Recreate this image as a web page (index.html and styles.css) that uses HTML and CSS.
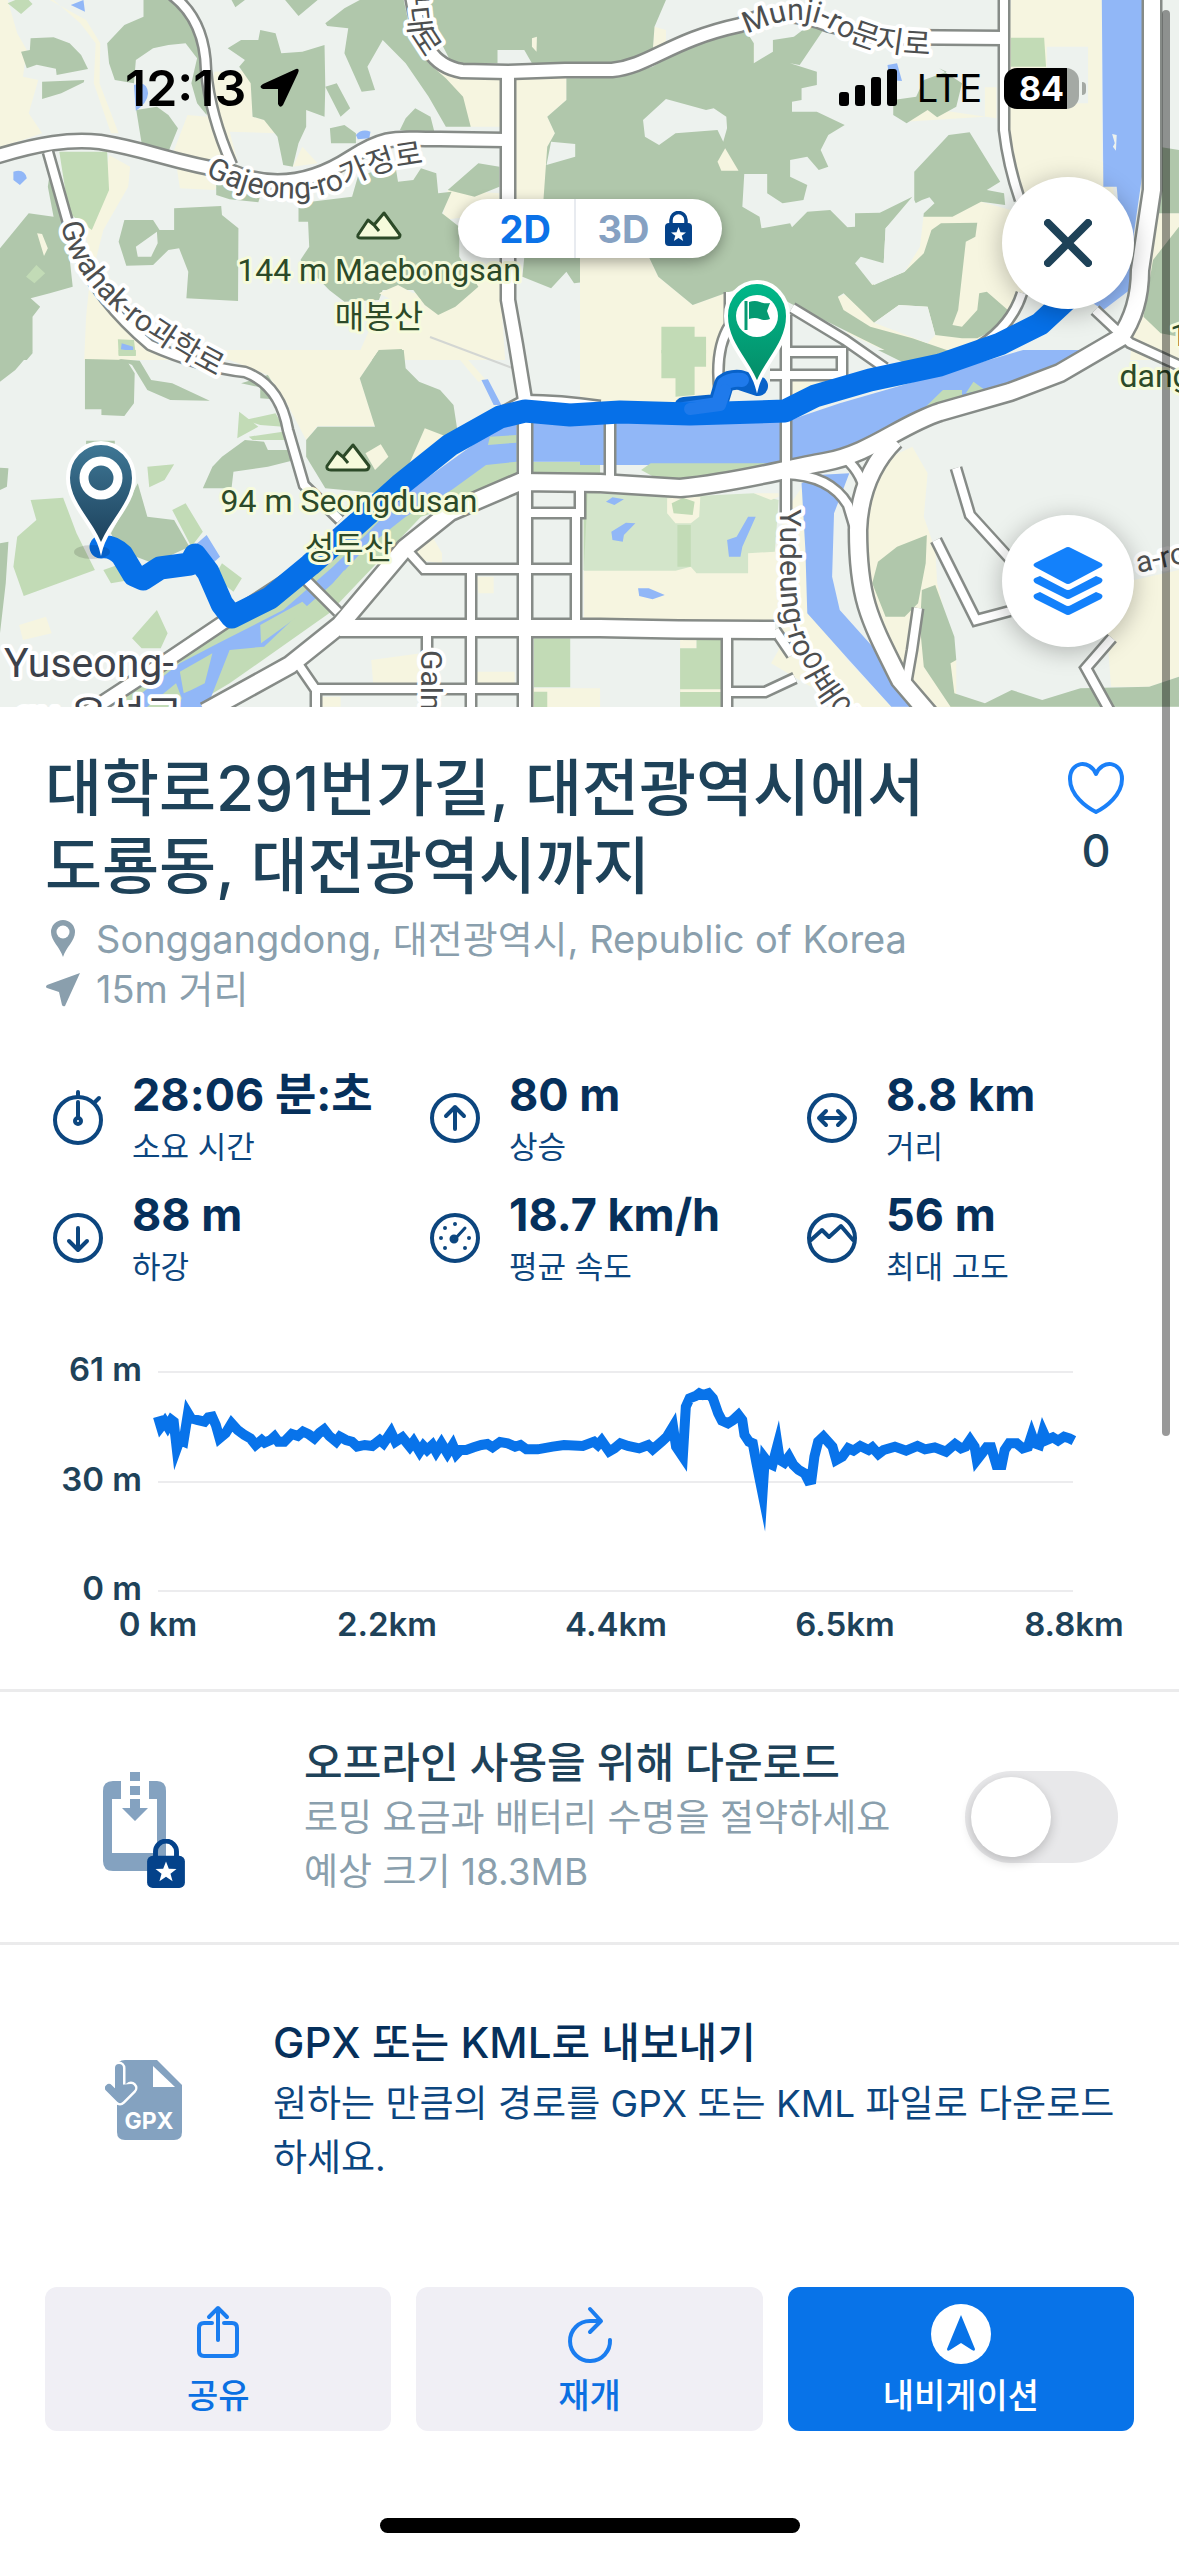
FILE: index.html
```html
<!DOCTYPE html>
<html lang="ko">
<head>
<meta charset="utf-8">
<meta name="viewport" content="width=device-width, initial-scale=1">
<title>대학로291번가길, 대전광역시에서 도룡동, 대전광역시까지</title>
<link rel="stylesheet" href="styles.css">
</head>
<body>
<svg class="defs" aria-hidden="true">
  <symbol id="lock" viewBox="0 0 27 35">
    <path d="M6 14V9a7.500 7.500 0 0 1 15 0v5" fill="none" stroke="#04428a" stroke-width="3.500"/>
    <rect y="12" width="27" height="23" rx="4" fill="#04428a"/>
    <path d="M13.500 16l2 5.200 5.500.2-4.300 3.400 1.500 5.300-4.700-3.100-4.700 3.100 1.500-5.300L6 21.400l5.500-.2z" fill="#fff"/>
  </symbol>
</svg>

<header class="hero">
  <svg class="map" viewBox="0 0 1179 707" role="img" aria-label="경로 지도">
    <defs>
      <linearGradient id="navy" x1="0" y1="0" x2="0" y2="1"><stop offset="0" stop-color="#3f7896"/><stop offset="1" stop-color="#1b3f5a"/></linearGradient>
      <linearGradient id="green" x1="0" y1="0" x2="0" y2="1"><stop offset="0" stop-color="#00b98a"/><stop offset="1" stop-color="#058a66"/></linearGradient>
      <path id="p-gajeong" d="M205 175C250 198 300 208 345 187S400 166 450 160"/>
      <path id="p-gwahak" d="M61 224C72 280 120 330 240 388"/>
      <path id="p-munji" d="M747 34C790 15 810 15 840 35C865 50 885 54 960 56"/>
      <path id="p-yudeung" d="M780 509V570C780 640 798 675 860 750"/>
      <path id="p-daero" d="M404 -20L408 20C410 44 425 58 458 92"/>
      <g id="roads" fill="none">
        <g class="wide">
          <path d="M-5 157C40 143 70 139 100 142C150 150 170 162 232 172C270 188 310 184 350 158S400 140 440 139L505 140"/>
          <path d="M412-5C420 45 432 66 462 71L508 72L565 70L612 70C650 66 670 40 740 25Q780 5 830 25L880 37L1004 38"/>
          <path d="M508 72V300L516 345L525 400V710"/>
          <path d="M88 712L160 665L230 618L310 566L380 500L470 432L525 402Q560 402 600 408"/>
        </g>
        <g class="huge">
          <path d="M205 712L290 665L340 625L405 548L450 512L520 482L600 483L680 488C740 482 780 470 825 462S900 425 940 412L1010 392L1060 373L1120 338Q1140 310 1140 270L1152 190V-5"/>
          <path d="M895 440Q860 475 858 530C858 600 870 620 900 680L930 715"/>
          <path d="M340 628H600Q680 630 775 630"/>
        </g>
        <g class="mid">
          <path d="M172-5Q205 20 206 70Q210 115 232 165"/>
          <path d="M48 152L70 230Q85 290 150 345Q200 367 245 372Q280 385 288 430L304 485L340 520"/>
          <path d="M1004-5V130Q1008 165 1020 200M1022 293Q1012 325 980 346"/>
          <path d="M306 580L338 612M405 548L424 569H578M471 569V710M576 513V628M530 513H580V488M427 632V710M294 658L316 690V710M316 689H525"/>
          <path d="M610 422V478M786 315V520M720 395Q714 350 730 325V292M792 308L845 340L885 368M790 352H842V375H770"/>
          <path d="M727 632V710M727 692H765L795 678M775 630L792 655M785 474Q830 475 848 505L860 545M845 458Q875 485 860 520"/>
          <path d="M956 468L970 515L1020 570M936 540L976 620L1010 611M918 608L912 650L905 690M1112 638L1086 668L1112 715M1095 310L1130 343L1185 368"/>
        </g>
      </g>
    </defs>
    <rect width="1179" height="707" fill="#edf2ee"/>

    <!-- north-west tile -->
    <g transform="scale(.3827 .3333)">
      <g class="cream">
        <path d="M0 0H20L45 100 70 150 60 230 100 240 75 340 110 400 60 420 0 440zM130 0L225 60 262 130 260 250 310 400 290 400 245 250 250 130 210 70 140 0zM455 450L490 345 540 350 560 215 655 210 660 350 690 360 725 400 600 395 620 480 560 570 470 565zM285 465L340 500 335 560 270 690 250 780 330 900 450 1080H220L225 950 240 780 220 690 265 600z"/>
        <path d="M1120 190L1310 230V380H1230L1180 290zM1340 230H1480V300L1430 350 1450 400 1430 440 1425 600H1345zM1170 570L1305 580V640L1155 660zM1230 840L1305 830 1320 1080H930L1000 900zM765 500L790 440 830 490z"/>
      </g>
      <g class="forest">
        <path d="M80 115L140 112 182 130 212 165 230 207 148 225 146 206 96 194 70 205 55 155 78 150zM110 245L220 240 219 247 160 280 110 297zM280 130L325 75 375 50V0H440L500 30 530 80 540 140 520 180 545 260 540 345 515 310 500 250 515 175 485 130 440 135 400 145 355 180 350 250 300 240 285 190zM356 330L410 320 440 345 465 385 440 455 370 430zM595 145L630 120 675 120 680 90 720 100 735 160 790 155 848 135 850 260 848 350 800 330 800 380 780 430 765 500 740 495 725 410 690 360 660 350 655 250 625 200 640 180z"/>
        <path d="M850 260L880 250 915 325 890 350zM605 0H640L615 22zM745 0H830L780 48zM850 70L900 25 940 0H1055L1075 110 1120 190 1165 235 1210 290 1230 380H1165L1120 290 1060 190 1000 120 960 200 980 270 945 275 900 160 910 85 855 78zM1085 0H1568V190L1400 210 1370 150H1300V190L1180 190 1140 100zM1085 325L1125 350 1135 395 1100 400 1045 390 1060 355zM862 385L900 375 930 400V430H865zM565 540L620 575 685 570 675 607 600 598 565 585z"/>
        <path d="M780 610L920 590 935 530 1000 505 1035 510 1040 545 1080 540 1100 505 1140 520 1145 580 1180 575 1155 640 1200 680V770L1250 860 1190 920 1145 945 1110 915 1080 870H1000L990 900 900 905 860 870 785 780 808 740 805 665H780zM1170 570L1250 490 1305 500V560L1240 590zM455 625L578 618 580 645 623 685 622 903 487 895 492 815 468 745 440 750 400 795 330 797 310 725 325 660H400L417 690H455zM0 745L75 640 140 650 125 560 130 520 150 530 170 650 190 860 130 880 80 895 105 920 85 950V1060L70 1080H0zM970 1080L990 1050 1050 1047 1055 1080zM1568 235H1480V300L1430 350 1450 400 1430 440 1420 600H1568zM1370 770H1568V840L1500 850 1480 815 1440 865 1365 830z"/>
      </g>
      <path class="land" d="M355 740L410 695 412 730 395 770 360 770zM1428 495L1440 425 1503 432V470z"/>
      <path class="cream" d="M990 880L1040 855 1080 880 1060 920zM97 700L110 702 125 745 115 768zM1390 115L1403 110 1402 155 1390 140z"/>
      <path class="park" d="M155 455H280L285 570 240 690 180 640zM20 10L40 0H75L85 12 55 42zM95 795L118 820 90 850 68 830zM308 1018L350 1020 355 1065H310z"/>
      <path class="water" d="M185 15L218 0 222 35zM350 255Q385 240 387 280 385 310 355 332zM35 515Q65 505 70 535L52 555 35 540zM930 405Q945 385 968 395L965 415 935 418zM318 1030L348 1040V1054L316 1048z"/>
    </g>

    <!-- north-east tile -->
    <g transform="translate(580) scale(.382 .3333)">
      <path class="cream" d="M1128 0H1366V480L1395 560 1410 700 1160 700 1110 400zM0 770H180L205 830 295 915 380 880V1080H0zM890 650L1050 605 1160 640 1160 900 1020 1040 850 1080 700 1000 675 890 850 815zM1490 640H1568V1080H1440zM190 160L195 80 225 90V130zM405 185L455 130V190zM850 365L910 325 1090 355V262H1060V350z"/>
      <path class="forest" fill-rule="evenodd" d="M0 0H225L195 80 190 160 100 190 0 190zM0 230L100 230 190 200 320 110 430 85 455 130V190L505 155V120L560 110 600 75 640 85 575 195 550 190 620 215V255L580 265V300L555 305V335H620L693 375 650 405 630 450 650 500 625 510 595 470 550 480V530L595 555 585 600 530 610 490 580V522H430L425 620 470 650 475 685 550 670 555 682 595 635 655 630 700 682 720 680V640L785 638 870 590 800 685 795 790 735 770 720 790 765 855 850 815 900 760 920 690 945 670 1040 668 1035 710 1010 725 990 930 975 975 1000 980 1040 930 1045 880 1065 875 1120 930 1100 980 1040 1015 1000 1015 930 1005 910 920 835 915 770 968 690 880 675 890 690 930 760 980 870 1015 960 1050 940 1080H850L550 910 460 850 380 880 295 915 205 830 180 770H0zM165 360L225 297 330 330 350 325 383 350 385 385 375 425 360 390 250 400 207 435 170 410z"/>
      <path class="forest" d="M875 515L965 405 1020 397 1100 545 1065 570 1110 580 1113 615 1050 605 975 650 895 650 875 600zM820 300L880 290 900 240 960 215 940 205 1000 250 985 320 935 352 910 330 855 370 820 345zM1515 440L1568 450V640H1500zM1568 680L1500 780 1475 950 1520 1000 1568 1010z"/>
      <path class="land" d="M895 600L915 592 928 610 900 640 890 740 850 815 770 855 745 820 795 790 800 685 860 620zM770 968L835 915 910 920 930 1005 910 1030zM1222 140H1330V310H1222z"/>
      <path class="cream" d="M380 445L415 512H370L360 485z"/>
      <path class="park" d="M1128 113H1215L1220 200H1128zM213 980H300V1010H330V1080H213z"/>
      <path class="water" d="M1366 0H1480L1475 500 1450 700V860L1370 930 1330 900 1420 750 1405 560 1370 560zM805 195L830 190 843 243 810 240z"/>
      <path class="land" d="M1393 402L1405 405 1403 452 1395 440 1400 430z"/>
    </g>

    <!-- south-west tile -->
    <g transform="translate(0 350) scale(.3827 .3333)">
      <path class="cream" d="M350 0H990L940 85 980 228H830L800 270 745 150 700 75 600 30zM50 825L120 800 135 850 60 870zM970 930L1100 910V1000H975zM1245 680H1290V730H1250zM1245 965H1345V1000H1245zM1390 1015H1568V1075H1390zM1070 570L1130 560 1155 610V640L1090 630zM840 1040H890V1070H840zM1180 0L1200 0 1270 90 1250 95z"/>
      <path class="forest" d="M222 27L330 30 352 70 350 160 325 198 265 195V178H222zM310 27L365 32 395 90 450 100 548 152 445 150 385 120 345 45zM0 0H85L40 60 0 95zM0 353L22 355 18 410 0 420zM0 580L22 575 15 700 0 850zM990 0H1055L1060 55 1095 95 1150 120 1185 165 1195 240 1070 370 990 430 850 415 800 320V270L830 230H980L940 85zM580 320L640 270 690 275 700 300 755 300 770 330 700 350 610 365 605 415 530 415 555 350zM360 400L385 500 455 510 495 590 400 640 310 600 290 550zM630 100L700 75 740 150 680 145V112zM225 272H300V290H225z"/>
      <path class="cream" d="M1070 340L1110 235 1190 270 1100 380zM955 310L995 283 1015 320 980 360z"/>
      <path class="park" d="M80 450L165 443 200 550 248 660 62 738 35 650 45 560 95 510zM385 350L455 343 430 390 390 412zM625 185L675 230 620 265zM640 210L720 190 740 230 680 225zM650 260L770 240 765 270H660zM450 480L485 460 530 545 500 590zM580 640L632 685 610 725 560 680zM270 660L320 640 340 690 290 700zM345 865L410 780 438 850 420 895 370 895zM300 1075L500 850 650 780 850 600 1000 500 1240 330 1350 260V410L1100 500 860 790 600 1000 490 1075zM1395 865H1490V1012H1395zM1395 1025H1430V1075H1395zM1390 335H1568V372H1390zM1525 430H1568V660H1525zM310 0H355V18H310z"/>
      <path class="water" d="M320 1075L470 940 570 880 740 780 870 650 960 550 1060 430 1290 240 1350 210V335L1270 345 1180 420 1060 500 950 600 870 700 800 770 690 890 600 900 540 1075zM1258 90L1275 88 1310 165 1290 165zM505 590L540 555 575 620 545 650zM1390 210H1568V335H1390z"/>
      <path class="park" d="M680 825L790 755 808 775 700 865 682 880zM470 965L555 910 535 1000 500 1020 480 1030zM380 1075L460 1000 475 1045 465 1075zM840 740L900 660 905 680 860 740zM1280 260L1350 255V278L1275 285z"/>
    </g>

    <!-- south-east tile -->
    <g transform="translate(580 350) scale(.382 .3333)">
      <path class="cream" d="M0 10H380V160H0zM550 80H680L640 150 550 160zM10 662L510 600 540 480 600 380 620 800 700 930 820 1075H700L500 940 520 900 530 820H10zM720 370L870 290 910 370 900 500 930 600 935 700 985 930V1075H870L720 600zM1568 660L1450 690 1380 850 1390 1010H1490L1568 980zM262 860H305V895H262z"/>
      <path fill="#d3e5ca" d="M20 430L260 440 455 430 520 450 510 605 440 610V670L305 670 290 650 250 662H10z"/>
      <path class="cream" d="M228 445L315 440 312 500 290 520H250L228 490zM455 430H520V440L500 450z"/>
      <path class="park" d="M240 460L270 443 300 455 295 495 245 490zM255 525H290V650H255zM305 860H370V1070H262V895H305zM213 0H330V50H300V135L250 140V85H213z"/>
      <path class="cream" d="M262 1018H370V1026H262z"/>
      <path class="water" d="M0 215L550 210 680 160 920 80 1160 0H1320L1180 90 1000 140 900 190 690 300 545 345 0 345zM580 400L620 375 705 370 665 490 660 680 680 780 860 1010 880 1070H815L700 925 595 790 590 600zM68 455L85 442 115 448 90 465zM82 545L120 518 145 520 115 555 112 575 85 570zM385 570L410 560 440 500 460 500 425 590 420 620 390 620zM152 715L180 715 222 735 190 748 155 738z"/>
      <path class="park" d="M160 360L185 340H530L400 385H200zM905 170L950 120 1000 120 1000 145 900 190zM1010 130L1030 95 1060 120z"/>
      <path class="forest" d="M908 555L905 640 885 760 850 800 800 800 765 700 780 635 830 590zM895 720L930 705 980 860 985 930 970 940 980 1030 1060 1060 1130 1020 1210 1050 1310 1015 1490 1010 1568 980V1070H970L900 950 890 830zM780 0H1100L850 40z"/>
    </g>

    <path d="M430 337L515 369" stroke="#d3d6d3" stroke-width="2"/>
    <use href="#roads" class="casing"/>
    <use href="#roads" class="fill"/>

    <!-- recorded route -->
    <g fill="none" stroke="#0670e8" stroke-linejoin="round" stroke-linecap="round">
      <path stroke="#0862c9" stroke-width="20" d="M684 407L718 404 724 384Q730 379 740 380L758 386"/>
      <path stroke="#1f7aeb" stroke-width="14" d="M684 409L718 404 724 384Q730 379 742 380"/>
      <path stroke-width="23" d="M101 547Q112 545 122 555L134 575 143 579 160 568 190 564 195 555 208 572 222 604 232 617 270 598 310 565 350 530 400 485 450 445 500 417 525 411 570 415 620 412 690 414 785 411 815 396 870 380 940 365 1000 344 1040 324 1068 298"/>
      <path stroke="#1f7aeb" stroke-width="12" d="M690 409L720 405 725 390"/>
    </g>

    <!-- summits -->
    <g fill="#f6fbdc" stroke="#2c4a28" stroke-width="3" stroke-linejoin="round">
      <path d="M358 235L368 220 374 225 384 213 400 235Q400 238 396 238H361Q357 238 358 235zM374 225L379 231"/>
      <path d="M327 466L337 452 343 457 353 445 369 466Q369 470 365 470H331Q326 470 327 466zM343 457L348 463"/>
    </g>

    <defs>
      <g id="peak-names" class="peak">
        <text x="379" y="281">144 m Maebongsan</text>
        <text x="379" y="328">매봉산</text>
        <text x="349" y="512">94 m Seongdusan</text>
        <text x="349" y="559">성두산</text>
        <text x="1179" y="346">1</text>
        <text x="1155" y="387">dang</text>
      </g>
      <g id="street-names" class="street">
        <text><textPath href="#p-gajeong">Gajeong-ro가정로</textPath></text>
        <text><textPath href="#p-gwahak">Gwahak-ro과학로</textPath></text>
        <text><textPath href="#p-munji">Munji-ro문지로</textPath></text>
        <text><textPath href="#p-yudeung">Yudeung-ro야배야로</textPath></text>
        <text><textPath href="#p-daero">구대로</textPath></text>
        <text transform="translate(421 650) rotate(90)">Galma-ro</text>
        <text transform="translate(1138 573) rotate(-12)">a-ro</text>
      </g>
      <g id="town-names" class="town">
        <text x="4" y="677">Yuseong-</text>
        <text x="14" y="730">gu 유성구</text>
      </g>
    </defs>
    <use href="#peak-names" class="halo halo-peak"/>
    <use href="#peak-names" fill="#2c4a28"/>
    <use href="#street-names" class="halo"/>
    <use href="#street-names" fill="#4d4f50"/>
    <use href="#town-names" class="halo"/>
    <use href="#town-names" fill="#3d424b"/>

    <!-- start and finish pins -->
    <ellipse cx="92" cy="552" rx="18" ry="7" fill="#0002"/>
    <path d="M101 548C95 525 68 505 68 478A33 35 0 0 1 134 478C134 505 107 525 101 548z" fill="url(#navy)" stroke="#fff" stroke-width="4"/>
    <circle cx="101" cy="478" r="17" fill="none" stroke="#fff" stroke-width="9"/>
    <path d="M757 386C751 364 726 345 726 316A31 34 0 0 1 788 316C788 345 763 364 757 386z" fill="url(#green)" stroke="#fff" stroke-width="4"/>
    <circle cx="757" cy="316" r="21" fill="#fff"/>
    <path d="M746 301V330" stroke="#059a72" stroke-width="3"/>
    <path d="M749 302Q755 300 760 302T770 303L767 311 770 319Q765 321 760 319T749 319z" fill="#059a72"/>
  </svg>

  <div class="status">
    <span class="time">12:13</span>
    <svg class="loc" viewBox="0 0 40 40"><path d="M36 1Q40 0 38 5L23 37Q20 41 18 36V21H3Q-2 19 3 16z"/></svg>
    <svg class="signal" viewBox="0 0 58 38"><rect y="23" width="10" height="14" rx="3"/><rect x="16" y="16" width="10" height="21" rx="3"/><rect x="32" y="8" width="10" height="29" rx="3"/><rect x="48" width="10" height="37" rx="3"/></svg>
    <span class="net">LTE</span>
    <span class="battery"><b>84</b></span>
  </div>

  <div class="dims">
    <button class="dim on" type="button">2D</button>
    <button class="dim" type="button">3D <svg class="lock"><use href="#lock"/></svg></button>
  </div>

  <button class="round close" type="button" aria-label="닫기">
    <svg viewBox="0 0 48 48" width="48" height="48"><path d="M4 4L44 44M44 4L4 44" stroke="#1e4258" stroke-width="8" stroke-linecap="round"/></svg>
  </button>
  <button class="round layers" type="button" aria-label="지도 레이어">
    <svg viewBox="0 0 70 70" width="70" height="70" fill="#1381fb"><path d="M32 2Q35 0 38 2L68 17Q71 19 68 21L38 37Q35 39 32 37L2 21Q-1 19 2 17z"/><path d="M7 30L32 43Q35 45 38 43L63 30 68 32Q71 34 68 37L38 52Q35 54 32 52L2 37Q-1 34 2 32z"/><path d="M7 46L32 59Q35 61 38 59L63 46 68 48Q71 50 68 53L38 68Q35 70 32 68L2 53Q-1 50 2 48z"/></svg>
  </button>
</header>

<main>
  <section class="intro">
    <div class="names">
      <h1>대학로291번가길, 대전광역시에서 도룡동, 대전광역시까지</h1>
      <p class="meta"><svg viewBox="0 0 36 40"><path d="M18 38C15 28 6 22 6 13A12 12 0 0 1 30 13C30 22 21 28 18 38z"/><circle cx="18" cy="13" r="6.500" fill="#fff"/></svg>Songgangdong, 대전광역시, Republic of Korea</p>
      <p class="meta"><svg viewBox="0 0 36 40"><path d="M35 4L20 37Q18 38 17 36L14 23 2 19Q0 18 2 16z"/></svg>15m 거리</p>
    </div>
    <button class="like" type="button" aria-label="좋아요">
      <svg viewBox="0 0 58 54"><path d="M29 51C19 46 3 34 3 18C3 0 23-2 29 13C35-2 55 0 55 18C55 34 39 46 29 51z" fill="none" stroke="#1a80f8" stroke-width="4" stroke-linejoin="round"/></svg>
      <span>0</span>
    </button>
  </section>

  <dl class="stats">
    <div class="stat"><svg viewBox="0 0 60 60"><circle cx="30" cy="30" r="23"/><path d="M30 2V7M47 12L51 8M30 12V28"/><circle cx="30" cy="31" r="3"/></svg><div><dd>28:06 분:초</dd><dt>소요 시간</dt></div></div>
    <div class="stat"><svg viewBox="0 0 60 60"><circle cx="30" cy="28" r="23"/><path d="M30 39V17M21 26L30 17 39 26"/></svg><div><dd>80 m</dd><dt>상승</dt></div></div>
    <div class="stat"><svg viewBox="0 0 60 60"><circle cx="30" cy="28" r="23"/><path d="M17 28H43M24 21L17 28 24 35M36 21L43 28 36 35"/></svg><div><dd>8.8 km</dd><dt>거리</dt></div></div>
    <div class="stat"><svg viewBox="0 0 60 60"><circle cx="30" cy="28" r="23"/><path d="M30 18V39M21 31L30 40 39 31"/></svg><div><dd>88 m</dd><dt>하강</dt></div></div>
    <div class="stat"><svg viewBox="0 0 60 60"><circle cx="30" cy="28" r="23"/><path d="M29 30L40 18" stroke-width="3"/><circle cx="29" cy="29" r="2.500"/><path d="M30 14V14M20 18V18M16 28V28M20 38V38M40 38V38M44 28V28"/></svg><div><dd>18.7 km/h</dd><dt>평균 속도</dt></div></div>
    <div class="stat"><svg viewBox="0 0 60 60"><circle cx="30" cy="28" r="23"/><path d="M9 30L20 20 27 27 39 16 51 30"/></svg><div><dd>56 m</dd><dt>최대 고도</dt></div></div>
  </dl>

  <svg class="chart" viewBox="0 0 1179 379" role="img" aria-label="고도 그래프">
    <path d="M158 62H1073M158 172H1073M158 281H1073" stroke="#ececee" stroke-width="2"/>
    <polyline transform="scale(.752 .3333)" points="210,320 214,350 219,335 223,350 228,330 231,335 235,415 239,390 244,395 250,310 254,325 262,330 272,335 277,322 282,320 287,345 292,385 300,370 308,340 316,360 325,375 333,385 340,405 348,390 352,398 360,390 365,380 370,395 378,395 388,372 396,378 403,365 410,372 418,385 425,368 431,358 438,378 447,395 452,380 460,390 468,395 475,410 485,405 495,408 505,390 510,400 520,367 526,395 535,382 545,410 550,395 558,425 563,408 568,420 575,405 580,425 587,400 595,430 602,405 607,432 612,420 620,420 630,412 640,405 648,402 655,412 665,396 675,400 685,410 692,405 700,418 715,418 735,410 750,405 775,408 790,395 795,405 800,392 810,424 817,415 825,400 835,408 850,415 862,405 868,418 880,395 887,380 895,350 899,410 908,440 912,290 917,265 925,258 930,250 935,255 942,250 948,265 955,310 960,332 968,340 975,330 982,315 987,330 990,375 996,395 1001,400 1006,460 1014,550 1017,445 1022,460 1027,465 1034,405 1037,450 1043,458 1049,440 1055,465 1062,480 1070,490 1075,512 1079,510 1083,440 1088,395 1095,380 1103,400 1107,410 1112,450 1120,440 1128,415 1135,422 1144,408 1155,420 1160,412 1168,432 1175,420 1190,410 1205,422 1220,408 1230,418 1243,412 1258,425 1270,402 1278,415 1284,410 1290,390 1296,410 1299,450 1306,430 1312,412 1318,412 1325,465 1332,465 1336,420 1342,400 1352,400 1360,415 1367,410 1372,375 1376,400 1382,405 1387,365 1392,390 1400,382 1407,392 1415,380 1422,385 1428,392"/>
    <g class="y-ticks"><text x="142" y="71">61 m</text><text x="142" y="181">30 m</text><text x="142" y="290">0 m</text></g>
    <g class="x-ticks"><text x="158" y="326">0 km</text><text x="387" y="326">2.2km</text><text x="616" y="326">4.4km</text><text x="845" y="326">6.5km</text><text x="1074" y="326">8.8km</text></g>
  </svg>

  <section class="row">
    <svg class="row-icon" viewBox="0 0 84 142" width="84" height="142">
      <path fill="#84a2c0" d="M10 35H18V53H9V107H54V53H46V35H54Q63 35 63 45V125H10Q0 125 0 115V45Q0 35 10 35z"/>
      <path fill="#84a2c0" d="M27 26H37V35H27zM27 40H37V49H27zM27 53H37V62H45L32 75 19 62H27z"/>
      <use href="#lock" x="44" y="93" width="38" height="49"/>
    </svg>
    <div class="row-text offline">
      <h2><label for="offline">오프라인 사용을 위해 다운로드</label></h2>
      <p>로밍 요금과 배터리 수명을 절약하세요<br>예상 크기 18.3MB</p>
    </div>
    <input class="switch" id="offline" type="checkbox" role="switch">
  </section>

  <section class="row export">
    <svg class="row-icon" viewBox="0 0 78 82" width="78" height="82">
      <path fill="#84a2c0" d="M20 1H52L77 26V73Q77 81 69 81H20Q12 81 12 73V9Q12 1 20 1z"/>
      <path fill="#fff" d="M48 7V28H70z"/>
      <path d="M14 9V30M4 29L15 40 26 29" fill="none" stroke="#fff" stroke-width="13" stroke-linecap="round" stroke-linejoin="round"/>
      <path d="M14 9V30M4 29L15 40 26 29L14 30" fill="#84a2c0" stroke="#84a2c0" stroke-width="8" stroke-linecap="round" stroke-linejoin="round"/>
      <text x="44" y="70">GPX</text>
    </svg>
    <div class="row-text">
      <h2>GPX 또는 KML로 내보내기</h2>
      <p>원하는 만큼의 경로를 GPX 또는 KML 파일로 다운로드하세요.</p>
    </div>
  </section>
</main>

<nav class="actions">
  <button type="button"><svg viewBox="0 0 60 60"><path d="M24 19H16Q11 19 11 24V47Q11 52 16 52H44Q49 52 49 47V24Q49 19 44 19H36M30 36V5M21 13L30 4 39 13"/></svg>공유</button>
  <button type="button"><svg viewBox="0 0 60 60"><path d="M40 17H31A20 20 0 1 0 51 36M31 5L42 17 31 28"/></svg>재개</button>
  <button type="button" class="primary"><svg viewBox="0 0 60 60"><circle cx="30" cy="30" r="30" class="disc"/><path class="needle" d="M30 11L44 45Q44 48 41 46L30 39 19 46Q16 48 16 45z"/></svg>내비게이션</button>
</nav>
<div class="home"></div>
<div class="thumb"></div>
</body>
</html>
```
FILE: styles.css
```css
* { box-sizing: border-box; }

body {
  margin: 0;
  position: relative;
  min-height: 100vh;
  background: #fff;
  color: #1e4259;
  font-family: "Inter", "Noto Sans CJK KR", sans-serif;
}

h1, h2, p, dl, dd, dt { margin: 0; }
button { border: 0; padding: 0; background: none; font: inherit; color: inherit; }
.defs { position: absolute; width: 0; height: 0; }

/* Map */
.hero { position: relative; }
.map {
  display: block;
  width: 100%;
  height: auto;
  font-family: "Roboto", "Noto Sans CJK KR", sans-serif;
}
.cream { fill: #f6f5e0; }
.forest { fill: #b0c7ab; }
.park { fill: #c2dbb6; }
.water { fill: #91b7f7; }
.land { fill: #edf2ee; }

.casing { stroke: #868b87; --grow: 5px; }
.fill { stroke: #fff; --grow: 0px; }
.mid { stroke-width: calc(8px + var(--grow)); }
.wide { stroke-width: calc(12px + var(--grow)); }
.huge { stroke-width: calc(16px + var(--grow)); }

.halo { fill: #fff; stroke: #fff; stroke-width: 8px; stroke-linejoin: round; }
.halo-peak { fill: #f6fbdc; stroke: #f6fbdc; stroke-width: 6px; }
.peak { font-size: 32px; text-anchor: middle; }
.street { font-size: 30px; }
.town { font-size: 41px; }

/* Status bar */
.status {
  position: absolute;
  inset: 60px 100px auto 125px;
  display: flex;
  align-items: center;
  height: 56px;
  color: #000;
}
.time { font-size: 50px; font-weight: 600; }
.loc { width: 40px; height: 40px; margin-left: 14px; }
.signal { width: 58px; height: 38px; margin-left: auto; }
.net { margin: 0 22px 0 20px; font-size: 38px; }
.battery {
  position: relative;
  width: 75px;
  height: 41px;
  border-radius: 13px;
  background: linear-gradient(90deg, #000 84%, #a4a9a4 84%);
  color: #fff;
  font-size: 34px;
  line-height: 41px;
  text-align: center;
}
.battery::after {
  content: "";
  position: absolute;
  left: 78px;
  top: 14px;
  width: 4px;
  height: 13px;
  border-radius: 0 4px 4px 0;
  background: #a4a9a4;
}

/* Map controls */
.dims {
  position: absolute;
  top: 199px;
  left: 50%;
  transform: translateX(-50%);
  display: flex;
  width: 264px;
  height: 59px;
  border-radius: 30px;
  background: #fff;
  box-shadow: 0 4px 14px #0005;
}
.dim {
  display: flex;
  align-items: center;
  gap: 16px;
  padding-left: 22px;
  color: #86a1c2;
  font-size: 38px;
  font-weight: 700;
}
.dim.on {
  width: 118px;
  padding-left: 42px;
  border-right: 2px solid #e8ebf0;
  color: #0b72e8;
}
.lock { width: 27px; height: 35px; }
.round {
  position: absolute;
  right: 45px;
  display: grid;
  place-items: center;
  width: 132px;
  height: 132px;
  border-radius: 50%;
  background: #fff;
  box-shadow: 0 4px 24px #0004;
}
.close { top: 177px; }
.layers { top: 515px; }

/* Title */
.intro { display: flex; justify-content: space-between; padding: 43px 45px 0; }
.names { flex: 1; }
h1 { margin-bottom: 8px; font-size: 62px; line-height: 78px; font-weight: 500; word-break: keep-all; }
.meta {
  display: flex;
  align-items: center;
  gap: 15px;
  color: #8a9fad;
  font-size: 38px;
  line-height: 50px;
}
.meta svg { width: 36px; height: 40px; fill: #8a9fad; }
.like {
  display: flex;
  flex-direction: column;
  align-items: center;
  align-self: flex-start;
  gap: 8px;
  width: 76px;
  padding-top: 11px;
  font-size: 45px;
  font-weight: 500;
}
.like svg { width: 58px; height: 54px; }

/* Figures */
.stats {
  display: grid;
  grid-template-columns: repeat(3, 1fr);
  gap: 16px 0;
  padding: 54px 0 0 48px;
}
.stat { display: flex; align-items: center; gap: 24px; }
.stat svg {
  width: 60px;
  height: 60px;
  fill: none;
  stroke: #0c467f;
  stroke-width: 4px;
  stroke-linecap: round;
  stroke-linejoin: round;
}
.stat dd { color: #06305b; font-size: 45px; font-weight: 700; line-height: 54px; }
.stat dt { color: #0c467f; font-size: 31px; line-height: 50px; }

/* Elevation chart */
.chart { display: block; width: 100%; height: auto; margin-top: 18px; }
.chart polyline {
  fill: none;
  stroke: #0873ea;
  stroke-width: 10px;
  stroke-miterlimit: 20;
  vector-effect: non-scaling-stroke;
}
.chart text { fill: #1e4259; font-size: 33px; font-weight: 600; }
.y-ticks { text-anchor: end; }
.x-ticks { text-anchor: middle; }

/* Option rows */
.row {
  display: flex;
  align-items: center;
  padding: 43px 61px 43px 103px;
  border-top: 3px solid #ebebec;
}
.row-icon { flex: none; }
.row-text { flex: 1; margin-left: 90px; color: #0c467f; }
.row-text h2 { margin-bottom: 6px; color: #06305b; font-size: 42px; font-weight: 500; line-height: 56px; }
.row-text p { font-size: 37px; line-height: 54px; }
.row-icon text { fill: #fff; font-size: 23px; font-weight: 700; text-anchor: middle; }
.row-text.offline { margin-left: 117px; color: #8a9fad; }
.row-text.offline h2 { margin-bottom: 0; color: #1e4259; }
.export { padding: 70px 45px 102px 105px; }
.switch {
  appearance: none;
  flex: none;
  width: 153px;
  height: 92px;
  margin: 0;
  padding: 6px;
  border-radius: 46px;
  background: #e8e8ea;
}
.switch::before {
  content: "";
  display: block;
  width: 80px;
  height: 80px;
  border-radius: 50%;
  background: #fff;
  box-shadow: 0 4px 12px #0003;
}
.switch:checked { background: #0873e8; }
.switch:checked::before { margin-left: auto; }

/* Bottom actions */
.actions { display: grid; grid-template-columns: repeat(3, 1fr); gap: 25px; padding: 0 45px; }
.actions button {
  display: flex;
  flex-direction: column;
  align-items: center;
  gap: 7px;
  height: 144px;
  padding-top: 17px;
  border-radius: 12px;
  background: #f0eff5;
  color: #0b70e2;
  font-size: 34px;
  font-weight: 500;
  line-height: 50px;
}
.actions svg {
  width: 60px;
  height: 60px;
  fill: none;
  stroke: #1a7df0;
  stroke-width: 4px;
  stroke-linecap: round;
  stroke-linejoin: round;
}
.actions .primary { background: #0873e8; color: #fff; }
.actions .disc { fill: #fff; stroke: none; }
.actions .needle { fill: #0873e8; stroke: none; }

.home { width: 420px; height: 15px; margin: 87px auto 22px; border-radius: 8px; background: #000; }
.thumb {
  position: absolute;
  top: 10px;
  right: 9px;
  width: 8px;
  height: 1426px;
  border-radius: 4px;
  background: #0006;
}
```
